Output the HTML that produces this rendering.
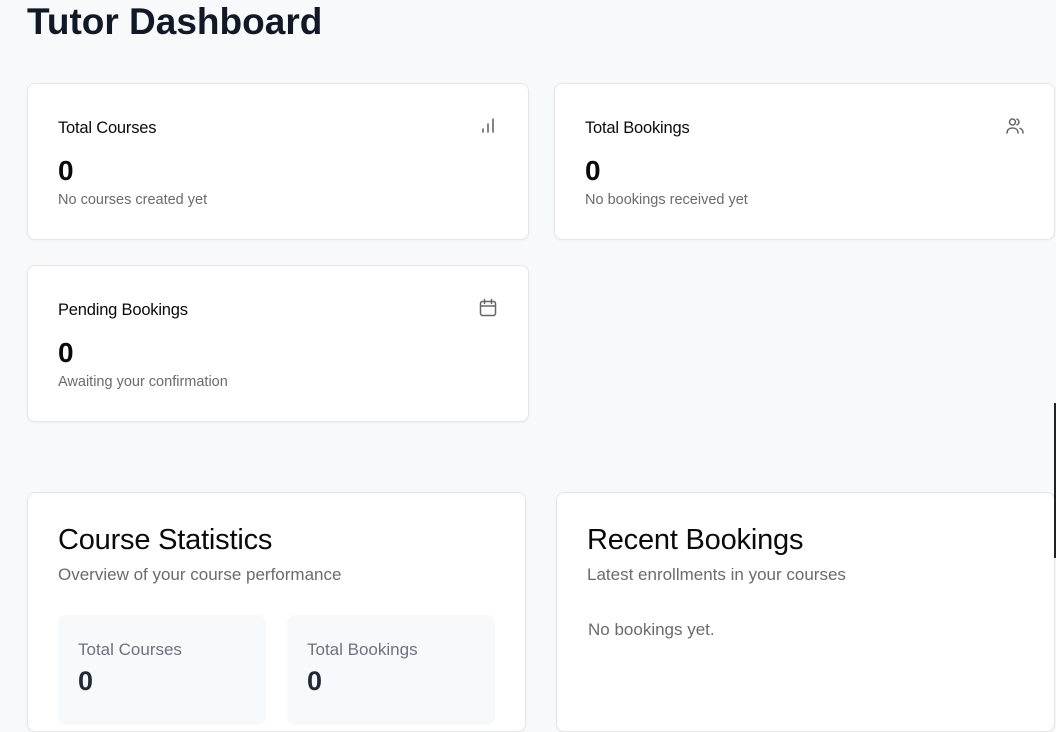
<!DOCTYPE html>
<html><head><meta charset="utf-8"><style>
*{margin:0;padding:0;box-sizing:border-box}
body{width:1056px;height:715px;overflow:hidden;background:#f8f9fb;font-family:"Liberation Sans",sans-serif;position:relative;color:#0a0a0a}
h1{position:absolute;left:27px;top:1px;font-size:37px;font-weight:700;color:#111827;line-height:42px;letter-spacing:0}
.card{position:absolute;background:#fff;border:1px solid #e3e5e8;border-radius:8px;box-shadow:0 1px 2px rgba(0,0,0,.04)}
.t{position:absolute;left:30px;top:35px;font-size:16.5px;font-weight:500;letter-spacing:-0.2px}
.n{position:absolute;left:30px;top:71px;font-size:28px;font-weight:700}
.s{position:absolute;left:30px;top:108px;font-size:14.5px;color:#6b6b6b}
.ic{position:absolute;top:32px;width:20px;height:20px}
.big{position:absolute;left:30px;top:31px;font-size:29px;font-weight:500;letter-spacing:-0.2px}
.sub{position:absolute;left:30px;top:72px;font-size:17px;color:#6b6b6b}
.box{position:absolute;background:#f8f9fb;border-radius:8px;top:122px;width:208px;height:110px}
.box .l{position:absolute;left:20px;top:25px;font-size:17px;color:#6b7280}
.box .v{position:absolute;left:20px;top:51px;font-size:27px;font-weight:700;color:#1f2937}
</style></head><body>
<h1>Tutor Dashboard</h1>
<div class="card" style="left:27px;top:83px;width:502px;height:157px">
<div class="t">Total Courses</div><div class="n">0</div><div class="s">No courses created yet</div>
<svg class="ic" style="left:450px" viewBox="0 0 20 20" fill="none" stroke="#666" stroke-width="1.6" stroke-linecap="round"><path d="M5 16v-3M10 16V8M15 16V3"/></svg>
</div>
<div class="card" style="left:554px;top:83px;width:501px;height:157px">
<div class="t">Total Bookings</div><div class="n">0</div><div class="s">No bookings received yet</div>
<svg class="ic" style="left:450px" viewBox="0 0 20 20" fill="none" stroke="#666" stroke-width="1.5" stroke-linecap="round"><circle cx="7.5" cy="6" r="3"/><path d="M2 17c0-3.5 2.5-5 5.5-5s5.5 1.5 5.5 5"/><path d="M12 3.2a3 3 0 0 1 0 5.6M15 12.3c1.8.6 3 2 3 4.7"/></svg>
</div>
<div class="card" style="left:27px;top:265px;width:502px;height:157px">
<div class="t">Pending Bookings</div><div class="n">0</div><div class="s">Awaiting your confirmation</div>
<svg class="ic" style="left:450px" viewBox="0 0 20 20" fill="none" stroke="#666" stroke-width="1.5" stroke-linecap="round"><rect x="2.5" y="3.5" width="15" height="14" rx="2"/><path d="M2.5 8h15M6.5 1.5v4M13.5 1.5v4"/></svg>
</div>
<div class="card" style="left:27px;top:492px;width:499px;height:240px">
<div class="big">Course Statistics</div><div class="sub">Overview of your course performance</div>
<div class="box" style="left:30px"><div class="l">Total Courses</div><div class="v">0</div></div>
<div class="box" style="left:259px"><div class="l">Total Bookings</div><div class="v">0</div></div>
</div>
<div class="card" style="left:556px;top:492px;width:499px;height:240px">
<div class="big">Recent Bookings</div><div class="sub">Latest enrollments in your courses</div>
<div style="position:absolute;left:31px;top:127px;font-size:17px;color:#6b6b6b">No bookings yet.</div>
</div>
<div style="position:absolute;left:1054px;top:403px;width:2px;height:155px;background:#222"></div>
</body></html>
